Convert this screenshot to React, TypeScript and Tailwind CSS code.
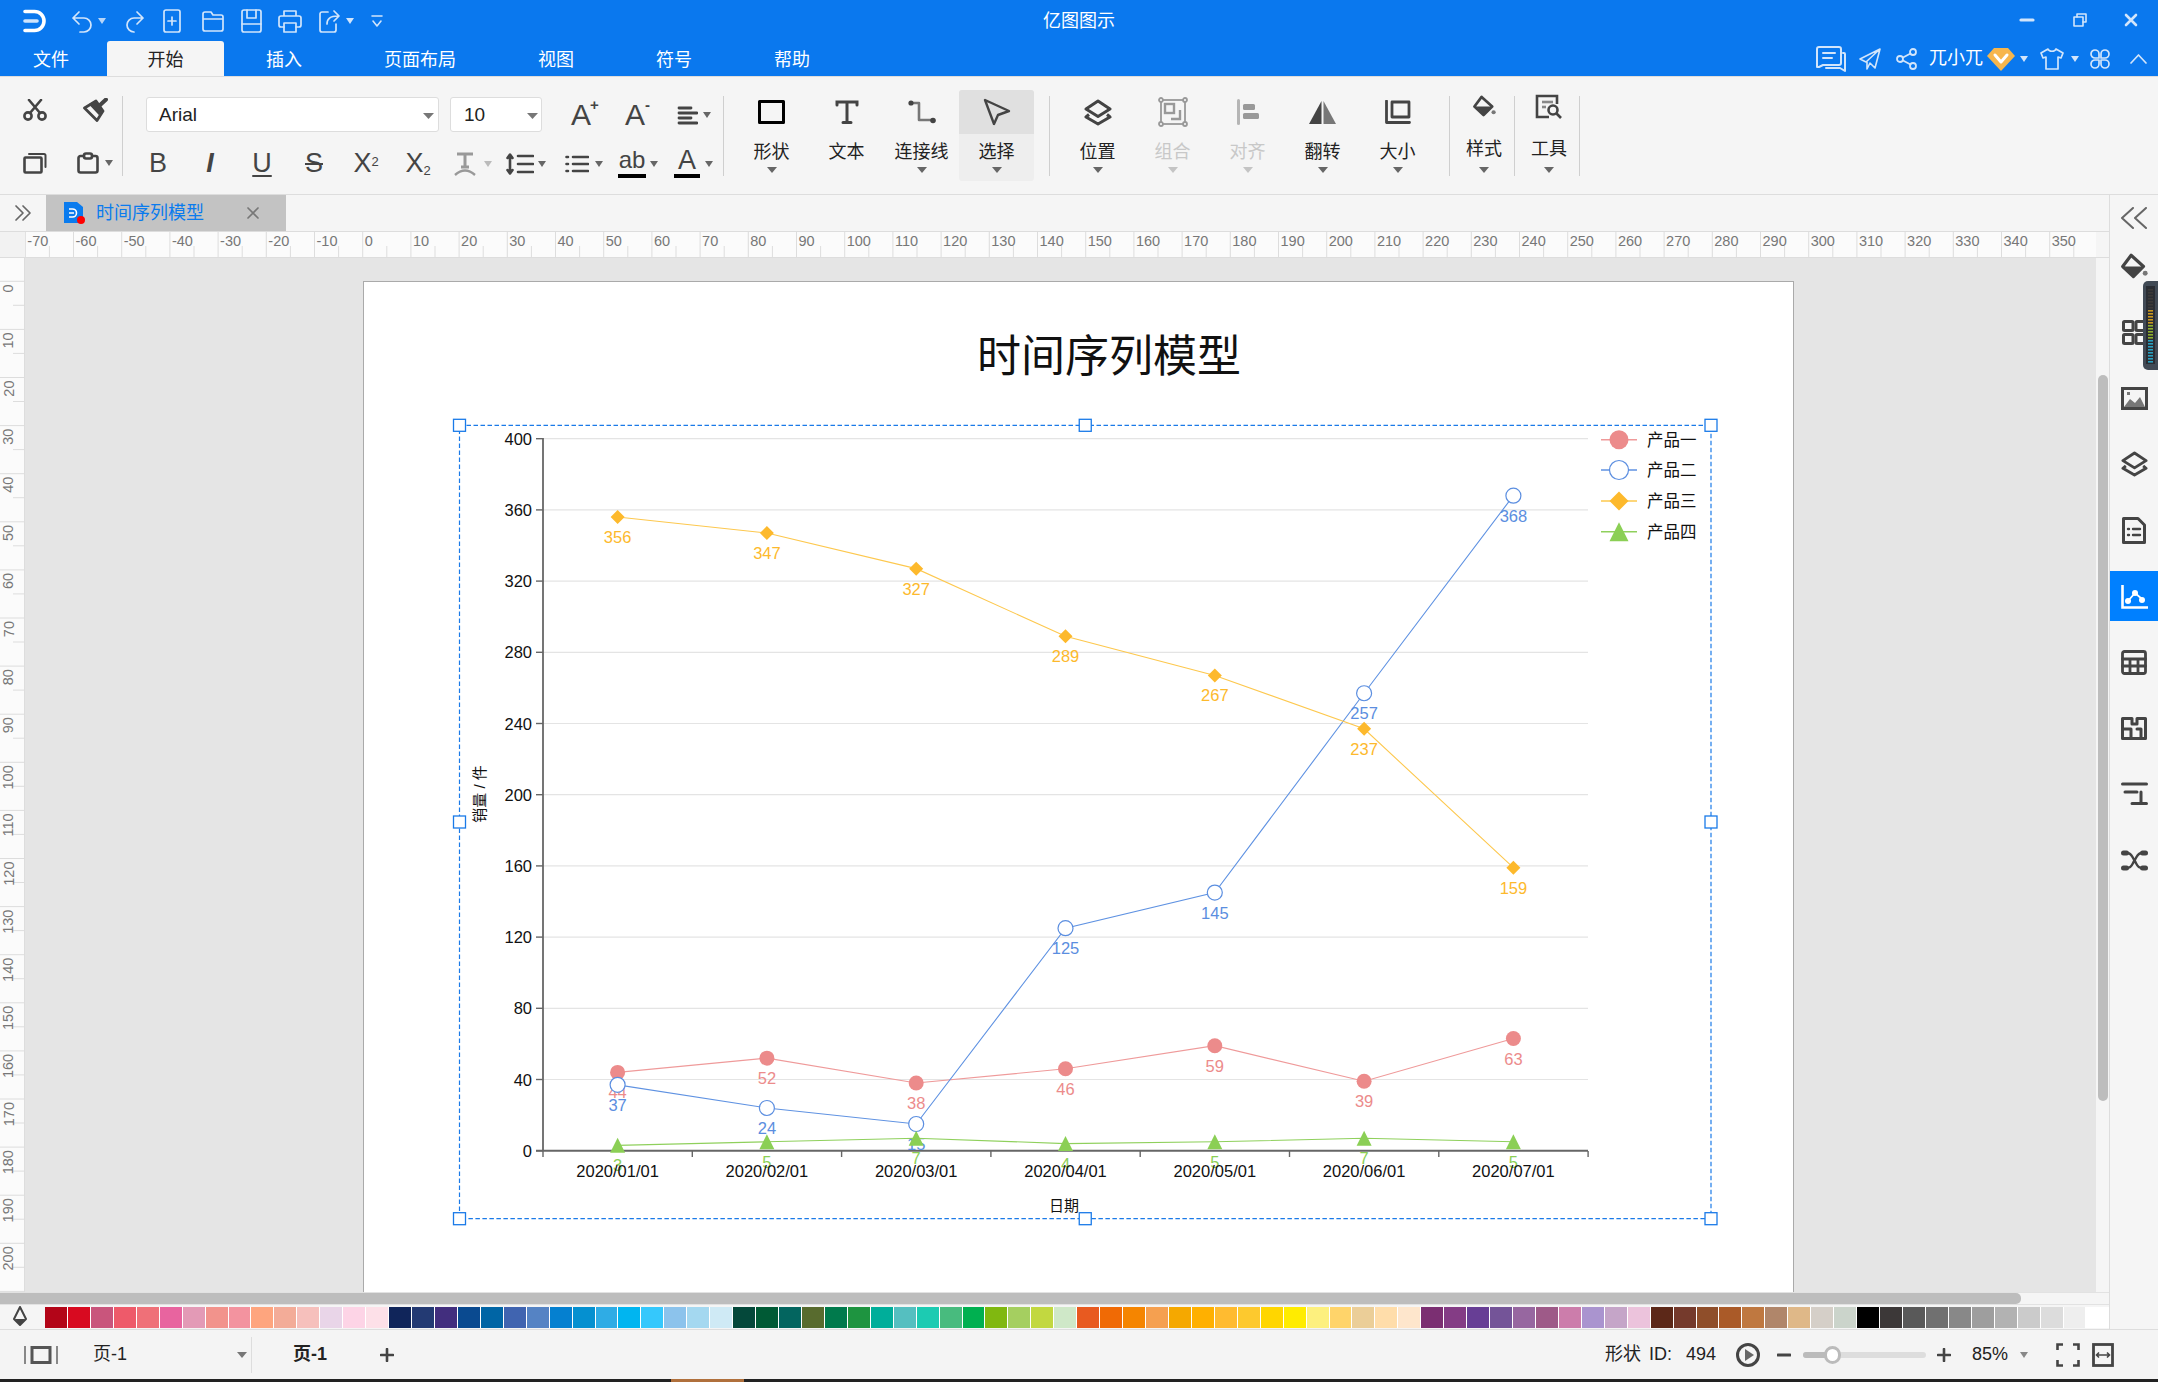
import React from "react";

type IP = { w: number; h: number; children: React.ReactNode; sw?: number; className?: string };
const I = ({ w, h, children, sw = 2.6, className = "" }: IP) => (
  <svg width={w} height={h} viewBox={`0 0 ${w} ${h}`} fill="none" stroke="currentColor" strokeWidth={sw} strokeLinecap="round" strokeLinejoin="round" className={`block shrink-0 ${className}`}>
    {children}
  </svg>
);
const Caret = ({ className = "text-[#666666]", w = 10 }: { className?: string; w?: number }) => (
  <svg width={w} height={6} viewBox="0 0 10 6" className={`block shrink-0 ${className}`} preserveAspectRatio="none">
    <path d="M0 0H10L5 6Z" fill="currentColor" />
  </svg>
);

const Bucket = ({ w = 24, h = 24, className = "" }: { w?: number; h?: number; className?: string }) => (
  <svg width={w} height={h} viewBox="0 0 24 24" fill="none" className={`block shrink-0 ${className}`}>
    <path d="M9 2 L20 12 L11 21 L1.5 12 Z" stroke="#444444" strokeWidth="2.8" strokeLinejoin="round" />
    <path d="M3 12 H19 L11 20 Z" fill="#444444" />
    <circle cx="21.5" cy="18" r="2.2" fill="#777777" />
  </svg>
);
const LayersIcon = ({ w = 28, h = 27 }: { w?: number; h?: number }) => (
  <svg width={w} height={h} viewBox="0 0 28 27" fill="none" stroke="#444444" strokeWidth="3" strokeLinejoin="round" className="block shrink-0">
    <path d="M14 2 L26 10 L14 17.5 L2 10 Z" />
    <path d="M5 15.5 L2 18 L14 25 L26 18 L23 15.5" />
  </svg>
);

const Tool = ({ className, children }: { className: string; children: React.ReactNode }) => (
  <div className={`flex h-[35px] shrink-0 items-center justify-center text-[#444444] ${className}`}>{children}</div>
);
const Letter = ({ className = "", children }: { className?: string; children: React.ReactNode }) => (
  <span className={`leading-none text-[#444444] ${className}`}>{children}</span>
);

const Big = ({ label, icon, caret = true, selected = false, disabled = false }: { label: string; icon: React.ReactNode; caret?: boolean; selected?: boolean; disabled?: boolean }) => (
  <div className={`flex w-[75px] shrink-0 flex-col items-center overflow-hidden rounded-[3px] pb-[8px] ${selected ? "bg-[#eeeeee]" : ""}`}>
    <div className={`flex h-[44px] w-full items-center justify-center ${selected ? "bg-[#e0e0e0]" : ""}`}>{icon}</div>
    <div className={`mt-[8px] h-[20px] text-[18px] leading-[20px] ${disabled ? "text-[#c8c8c8]" : "text-[#222222]"}`}>{label}</div>
    <div className="mt-[5px] h-[6px]">{caret && <Caret className={disabled ? "text-[#c4c4c4]" : "text-[#666666]"} />}</div>
  </div>
);
const Small = ({ label, icon }: { label: string; icon: React.ReactNode }) => (
  <div className="flex w-[64px] shrink-0 flex-col items-center pl-[4px]">
    <div className="flex h-[32px] w-full items-center justify-center">{icon}</div>
    <div className="mt-[17px] h-[20px] text-[18px] leading-[20px] text-[#222222]">{label}</div>
    <div className="mt-[8px] h-[6px]"><Caret /></div>
  </div>
);
const Sep = ({ className = "" }: { className?: string }) => <div className={`mt-[19px] h-[80px] w-px shrink-0 bg-[#cfcfcf] ${className}`} />;

const swatches = [
  "bg-[#b30518]","bg-[#d80a20]","bg-[#c9557c]","bg-[#ee5a6a]","bg-[#ef7078]","bg-[#e8649f]","bg-[#e39ab6]","bg-[#f2938c]","bg-[#f3939f]","bg-[#fea57e]","bg-[#f3ac98]","bg-[#f6c0bc]","bg-[#e9d5e8]","bg-[#fdd4e6]","bg-[#fde0e8]",
  "bg-[#10255a]","bg-[#233a73]","bg-[#422e7e]","bg-[#0a4a90]","bg-[#0065a5]","bg-[#4064b0]","bg-[#5583c4]","bg-[#0580d0]","bg-[#0590d0]","bg-[#2facE5]","bg-[#00b5f0]","bg-[#35c8fc]","bg-[#8cc3ec]","bg-[#a4d8f0]","bg-[#cfeaf5]",
  "bg-[#04483a]","bg-[#005a35]","bg-[#03655f]","bg-[#586b2e]","bg-[#007a4c]","bg-[#1e9440]","bg-[#00ae9a]","bg-[#55bfc0]","bg-[#1ccbb2]","bg-[#48bb7e]","bg-[#00b050]","bg-[#80b810]","bg-[#a5cf60]","bg-[#c2d840]","bg-[#cfe8c8]",
  "bg-[#e85a20]","bg-[#f06a05]","bg-[#f58500]","bg-[#f5a050]","bg-[#f5a800]","bg-[#ffb000]","bg-[#ffbb30]","bg-[#fdc92e]","bg-[#ffd600]","bg-[#ffec00]","bg-[#fdf07e]","bg-[#ffd46a]","bg-[#ebce98]","bg-[#ffddaa]","bg-[#fee6cc]",
  "bg-[#7b2f72]","bg-[#843c85]","bg-[#673e95]","bg-[#745498]","bg-[#9767a0]","bg-[#9e5a88]","bg-[#cc7dab]","bg-[#aa94cf]","bg-[#c5a5c8]","bg-[#ecc3dc]",
  "bg-[#5c2818]","bg-[#753a2c]","bg-[#8f4e2a]","bg-[#aa5a28]","bg-[#bf7840]","bg-[#b0866a]","bg-[#dfb888]","bg-[#d5cfc8]","bg-[#cbd4cb]",
  "bg-[#000000]","bg-[#3c3838]","bg-[#595959]","bg-[#707070]","bg-[#888888]","bg-[#9e9e9e]","bg-[#b2b2b2]","bg-[#cbcbcb]","bg-[#dcdcdc]","bg-[#eeeeee]","bg-[#ffffff]",
];

const range = (a: number, b: number, s: number) => { const r: number[] = []; for (let v = a; v <= b; v += s) r.push(v); return r; };

const TopRuler = () => (
  <svg width={2071} height={25} viewBox="25 232 2071 25" className="block shrink-0 bg-[#fbfbfb]">
    {range(-70, 350, 10).map((n) => {
      const x = 362.7 + n * 4.82;
      return (
        <g key={n}>
          <line x1={x} y1={232} x2={x} y2={257} stroke="#dddddd" />
          <line x1={x + 24.1} y1={246} x2={x + 24.1} y2={257} stroke="#dddddd" />
          <text x={x + 2} y={245.5} fontSize={14.5} fill="#777777">{n}</text>
        </g>
      );
    })}
  </svg>
);
const LeftRuler = () => (
  <svg width={25} height={1040} viewBox="0 258 25 1040" className="block shrink-0 bg-[#fbfbfb]">
    <line x1={24.5} y1={258} x2={24.5} y2={1298} stroke="#dddddd" />
    {range(0, 210, 10).map((n) => {
      const y = 281.3 + n * 4.81;
      return (
        <g key={n}>
          <line x1={0} y1={y} x2={25} y2={y} stroke="#dddddd" />
          <line x1={13} y1={y + 24} x2={25} y2={y + 24} stroke="#dddddd" />
          <text x={13.5} y={y + 3} fontSize={14.5} fill="#777777" textAnchor="end" transform={`rotate(-90 13.5 ${y + 3})`}>{n}</text>
        </g>
      );
    })}
  </svg>
);

const px = (i: number) => 617.6 + 149.3 * i;
const py = (v: number) => 1151.7 - v * 1.78;
const dates = ["2020/01/01", "2020/02/01", "2020/03/01", "2020/04/01", "2020/05/01", "2020/06/01", "2020/07/01"];
const series = [
  { name: "产品一", data: [44, 52, 38, 46, 59, 39, 63], line: "#ef9a9a", color: "#ec8b8b", kind: "dot" },
  { name: "产品二", data: [37, 24, 15, 125, 145, 257, 368], line: "#5f92e2", color: "#5b8ee0", kind: "ring" },
  { name: "产品三", data: [356, 347, 327, 289, 267, 237, 159], line: "#fdc84e", color: "#fdb92c", kind: "diamond" },
  { name: "产品四", data: [3, 5, 7, 4, 5, 7, 5], line: "#8fd05c", color: "#8bcf55", kind: "tri" },
];
const Marker = ({ kind, x, y, color, s = 7 }: { kind: string; x: number; y: number; color: string; s?: number }) => {
  if (kind === "dot") return <circle cx={x} cy={y} r={s} fill={color} />;
  if (kind === "ring") return <circle cx={x} cy={y} r={s} fill="#ffffff" stroke={color} strokeWidth={1.2} />;
  if (kind === "diamond") return <path d={`M${x} ${y - s}L${x + s} ${y}L${x} ${y + s}L${x - s} ${y}Z`} fill={color} />;
  return <path d={`M${x} ${y - s}L${x + s} ${y + s}L${x - s} ${y + s}Z`} fill={color} />;
};

const Chart = () => {
  const box = { l: 459.5, t: 426.3, r: 1711, b: 1219.7 };
  const hx = [box.l, (box.l + box.r) / 2, box.r];
  const hy = [box.t, (box.t + box.b) / 2, box.b];
  return (
    <svg width={1270} height={815} viewBox="450 415 1270 815" className="ml-[86px] mt-[27px] block">
      {range(40, 400, 40).map((v) => (
        <line key={v} x1={543} y1={py(v)} x2={1588} y2={py(v)} stroke="#e4e4e4" strokeWidth={1.2} />
      ))}
      {range(0, 400, 40).map((v) => (
        <g key={v}>
          <line x1={536} y1={py(v)} x2={543} y2={py(v)} stroke="#666666" strokeWidth={1.4} />
          <text x={532} y={py(v) + 6} fontSize={16.5} textAnchor="end" fill="#111111">{v}</text>
        </g>
      ))}
      {range(0, 7, 1).map((i) => (
        <line key={i} x1={543 + i * 149.3} y1={1152} x2={543 + i * 149.3} y2={1158} stroke="#666666" strokeWidth={1.4} />
      ))}
      <line x1={543} y1={439} x2={543} y2={1152} stroke="#666666" strokeWidth={1.8} />
      <line x1={536} y1={1151.7} x2={1588} y2={1151.7} stroke="#666666" strokeWidth={2} />
      {series.map((s) => (
        <g key={s.name}>
          <polyline points={s.data.map((v, i) => `${px(i)},${py(v)}`).join(" ")} fill="none" stroke={s.line} strokeWidth={1.1} />
          {s.data.map((v, i) => (
            <text key={i} x={px(i)} y={py(v) + 26} fontSize={16.5} textAnchor="middle" fill={s.color}>{v}</text>
          ))}
        </g>
      ))}
      {series.map((s) => (
        <g key={s.name}>
          {s.data.map((v, i) => (
            <Marker key={i} kind={s.kind} x={px(i)} y={py(v)} color={s.color} s={s.kind === "diamond" ? 7 : 7.5} />
          ))}
        </g>
      ))}
      {dates.map((d, i) => (
        <text key={d} x={px(i)} y={1178} fontSize={16.5} textAnchor="middle" fill="#111111">{d}</text>
      ))}
      <text x={1064} y={1212} fontSize={15} textAnchor="middle" fill="#111111">日期</text>
      <text x={0} y={0} fontSize={15} textAnchor="middle" fill="#111111" transform="translate(485 795) rotate(-90)">销量 / 件</text>
      {series.map((s, i) => {
        const y = [440.7, 471, 502, 532.7][i];
        return (
          <g key={s.name}>
            <line x1={1601} y1={y} x2={1637} y2={y} stroke={s.line} strokeWidth={1.6} />
            <Marker kind={s.kind} x={1619} y={y} color={s.color} s={9.5} />
            <text x={1647} y={y + 6} fontSize={16.5} fill="#111111">{s.name}</text>
          </g>
        );
      })}
      <rect x={box.l} y={box.t} width={box.r - box.l} height={box.b - box.t} fill="none" stroke="#1a7ae8" strokeWidth={1.2} strokeDasharray="4.5 2.5" />
      {hx.map((x, a) => hy.map((y, b) => (a === 1 && b === 1 ? null : (
        <rect key={`${a}${b}`} x={x - 6} y={y - 6} width={12} height={12} fill="#ffffff" stroke="#1a7ae8" strokeWidth={1.3} />
      ))))}
    </svg>
  );
};

const Meter = () => (
  <svg width={15} height={89} viewBox="0 0 15 89" className="absolute right-0 top-[86px] block">
    <path d="M5 0H15V89H5A5 5 0 0 1 0 84V5A5 5 0 0 1 5 0Z" fill="#414a55" />
    <rect x={3} y={5} width={9} height={78} fill="#2a2d33" />
    {range(0, 24, 1).map((i) => (
      <rect key={i} x={5} y={8 + i * 3} width={5} height={1.6} fill={i < 7 ? "#3c3a38" : i < 12 ? "#c9971e" : i < 17 ? "#8fae2c" : "#2a9fc0"} />
    ))}
  </svg>
);

const RP = ({ active = false, children }: { active?: boolean; children: React.ReactNode }) => (
  <div className={`flex h-[50px] w-full items-center justify-center ${active ? "bg-[#0080ff]" : ""}`}>{children}</div>
);

export default function App() {
  return (
    <div className="flex h-[1382px] w-[2158px] flex-col overflow-hidden bg-[#f5f5f5] font-['Liberation_Sans','Noto_Sans_CJK_SC',sans-serif]">
      {/* Title bar */}
      <div className="h-[76px] shrink-0 bg-[#0a78ee] text-white">
        <div className="grid h-[41px] grid-cols-[1fr_auto_1fr] items-center">
          <div className="flex items-center text-[#d2e5fb]">
            <svg width={24} height={24} viewBox="0 0 24 24" fill="none" className="ml-[23px] block shrink-0">
              <path d="M2 2.5H11.5A9.5 9.5 0 0 1 11.5 21.5H2" stroke="#ffffff" strokeWidth="3.6" strokeLinecap="round" />
              <path d="M2 12H14" stroke="#cfe4fc" strokeWidth="3.6" strokeLinecap="round" />
            </svg>
            <I w={22} h={24} sw={1.7} className="ml-[24px]"><path d="M8 3L2 9L8 15M2 9H13A7 7 0 0 1 13 23H9" /></I>
            <Caret w={8} className="ml-[5px] text-[#b7d5f8]" />
            <I w={19} h={24} sw={1.7} className="ml-[20px]"><path d="M11 3L17 9L11 15M17 9H8A7 7 0 0 0 8 23" /></I>
            <I w={18} h={24} sw={1.7} className="ml-[18px]"><rect x={1} y={1} width={16} height={22} rx={2} /><path d="M9 8V16M5 12H13" /></I>
            <I w={22} h={24} sw={1.7} className="ml-[21px]"><path d="M1 20V5A2 2 0 0 1 3 3H9L11 6H19A2 2 0 0 1 21 8V20A2 2 0 0 1 19 22H3A2 2 0 0 1 1 20ZM1 10H21" /></I>
            <I w={21} h={24} sw={1.7} className="ml-[17px]"><rect x={1} y={1} width={19} height={22} rx={2} /><path d="M6 1V9H15V1M1 15H20" /></I>
            <I w={24} h={24} sw={1.7} className="ml-[16px]"><path d="M6 7V2H18V7M6 18H3A2 2 0 0 1 1 16V9A2 2 0 0 1 3 7H21A2 2 0 0 1 23 9V16A2 2 0 0 1 21 18H18" /><rect x={6} y={14} width={12} height={9} /></I>
            <I w={21} h={24} sw={1.7} className="ml-[17px]"><path d="M9 3H3A2 2 0 0 0 1 5V21A2 2 0 0 0 3 23H15A2 2 0 0 0 17 21V15" /><path d="M8 15C8 10 11 7 19 7M15 2L20 7L15 12" /></I>
            <Caret w={8} className="ml-[6px] text-[#d2e5fb]" />
            <I w={12} h={14} sw={1.6} className="ml-[17px]"><path d="M1 2H11M2 7L6 12L10 7" /></I>
          </div>
          <div className="text-[18px] leading-none">亿图图示</div>
          <div className="flex items-center justify-end pb-[2px] text-[#d2e5fb]">
            <I w={16} h={6} sw={3.2}><path d="M2 3H14" /></I>
            <I w={14} h={14} sw={1.6} className="ml-[38px]"><path d="M4 4V1H13V9H10" /><rect x={1} y={4} width={9} height={9} /></I>
            <I w={14} h={14} sw={2.6} className="ml-[37px] mr-[20px]"><path d="M2 2L12 12M12 2L2 12" /></I>
          </div>
        </div>
        <div className="flex h-[35px] items-center text-[18px]">
          <div className="flex h-full w-[102px] items-center justify-center pt-[3px]">文件</div>
          <div className="ml-[5px] flex h-full w-[117px] items-center justify-center rounded-t-[3px] bg-[#f5f5f5] pt-[3px] text-[#222222]">开始</div>
          <div className="flex h-full w-[120px] items-center justify-center pt-[3px]">插入</div>
          <div className="flex h-full w-[152px] items-center justify-center pt-[3px]">页面布局</div>
          <div className="flex h-full w-[120px] items-center justify-center pt-[3px]">视图</div>
          <div className="flex h-full w-[116px] items-center justify-center pt-[3px]">符号</div>
          <div className="flex h-full w-[120px] items-center justify-center pt-[3px]">帮助</div>
          <div className="ml-auto flex items-center text-[#d2e5fb]">
            <I w={30} h={26} sw={2}><path d="M3 1H23A2 2 0 0 1 25 3V17A2 2 0 0 1 23 19H7L3 21H1V3A2 2 0 0 1 3 1Z" /><path d="M7 7H19M7 12H16M27 7H28A1 1 0 0 1 29 8V25L24 22H10" /></I>
            <I w={22} h={22} sw={1.6} className="ml-[13px]"><path d="M21 1L1 11L7 14L21 1L16 20L11 15L8 21V14" /></I>
            <I w={21} h={22} sw={1.8} className="ml-[15px]"><circle cx={4} cy={11} r={3} /><circle cx={17} cy={4} r={3} /><circle cx={17} cy={18} r={3} /><path d="M7 9.5L14.5 5.5M7 12.5L14.5 16.5" /></I>
            <span className="ml-[12px] text-white">兀小兀</span>
            <svg width={28} height={24} viewBox="0 0 28 24" className="ml-[4px] block shrink-0">
              <path d="M7 1H21L28 9L14 24L0 9Z" fill="#f7b64c" />
              <path d="M8 8L14 15L20 8" fill="none" stroke="#ffffff" strokeWidth="3" strokeLinecap="round" strokeLinejoin="round" />
            </svg>
            <Caret w={8} className="ml-[5px] text-[#d2e5fb]" />
            <I w={24} h={22} sw={1.7} className="ml-[12px]"><path d="M8 1L1 5L3 10L6 9V21H18V9L21 10L23 5L16 1C15 4 9 4 8 1Z" /></I>
            <Caret w={8} className="ml-[7px] text-[#d2e5fb]" />
            <I w={20} h={20} sw={1.7} className="ml-[11px]"><path d="M5 1A4 4 0 0 1 9 5V9H5A4 4 0 0 1 5 1ZM15 1A4 4 0 0 0 11 5V9H15A4 4 0 0 0 15 1ZM5 19A4 4 0 0 0 9 15V11H5A4 4 0 0 0 5 19ZM15 19A4 4 0 0 1 11 15V11H15A4 4 0 0 1 15 19Z" /></I>
            <I w={17} h={10} sw={1.7} className="ml-[20px] mr-[11px]"><path d="M1 9L8.5 1L16 9" /></I>
          </div>
        </div>
      </div>

      {/* Ribbon */}
      <div className="flex h-[119px] shrink-0 border-y border-[#dddddd] bg-[#f5f5f5]">
        <div className="w-[122px] shrink-0 pl-[5px] pt-[15px]">
          <div className="flex h-[36px] items-center">
            <Tool className="w-[60px]">
              <I w={24} h={22} sw={2.6}><circle cx={5} cy={17} r={3.6} /><circle cx={19} cy={17} r={3.6} /><path d="M7 14L18 1M17 14L6 1" /></I>
            </Tool>
            <Tool className="w-[60px]">
              <svg width={25} height={24} viewBox="0 0 25 24" fill="none" className="block">
                <path d="M1.5 10L13 3L20 13L14 22.5Z" stroke="#444444" strokeWidth="2.8" strokeLinejoin="round" />
                <path d="M7 6.5L13 3L19 12L16 16Z" fill="#444444" stroke="#444444" strokeWidth="1.5" />
                <path d="M16 8L23 1.5" stroke="#444444" strokeWidth="4" strokeLinecap="round" />
              </svg>
            </Tool>
          </div>
          <div className="mt-[17px] flex h-[36px] items-center">
            <Tool className="w-[60px]">
              <I w={24} h={22} sw={2.6}><rect x={1.5} y={5.5} width={17} height={15} rx={1} /><path d="M6 2H21A1.5 1.5 0 0 1 22.5 3.5V15" strokeWidth={2} /></I>
            </Tool>
            <Tool className="w-[57px] gap-[6px]">
              <I w={22} h={22} sw={2.6} className="ml-[2px]"><path d="M7 4H3.5A2 2 0 0 0 1.5 6V18.5A2 2 0 0 0 3.5 20.5H18.5A2 2 0 0 0 20.5 18.5V6A2 2 0 0 0 18.5 4H15" /><rect x={7} y={1.5} width={8} height={5} rx={2} /></I>
              <Caret w={8} />
            </Tool>
          </div>
        </div>
        <Sep />
        <div className="w-[600px] shrink-0 pt-[20px]">
          <div className="flex h-[35px] items-center pl-[23px]">
            <div className="flex h-[35px] w-[293px] shrink-0 items-center justify-between rounded-[3px] border border-[#dddddd] bg-white pl-[12px] pr-[3px] pt-[2px] text-[19px] text-[#222222]">
              Arial
              <Caret className="mr-[1px] text-[#777777]" w={11} />
            </div>
            <div className="ml-[11px] flex h-[35px] w-[92px] shrink-0 items-center justify-between rounded-[3px] border border-[#dddddd] bg-white pl-[13px] pr-[3px] pt-[2px] text-[19px] text-[#222222]">
              10
              <Caret className="text-[#777777]" w={11} />
            </div>
            <Tool className="ml-[12px] w-[54px]">
              <Letter className="relative text-[30px]">A<span className="absolute left-[19px] top-[-3px] text-[15px] font-bold">+</span></Letter>
            </Tool>
            <Tool className="w-[54px]">
              <Letter className="relative text-[30px]">A<span className="absolute left-[20px] top-[-3px] text-[15px] font-bold">-</span></Letter>
            </Tool>
            <Tool className="w-[63px] gap-[5px]">
              <I w={21} h={20} sw={2.8}><path d="M2 3H14M2 8H20M2 13H14M2 18H20" /></I>
              <Caret w={8} />
            </Tool>
          </div>
          <div className="mt-[14px] flex h-[35px] items-center">
            <Tool className="ml-[9px] w-[52px]"><Letter className="text-[27px]">B</Letter></Tool>
            <Tool className="w-[52px]"><Letter className="text-[27px] font-bold italic">I</Letter></Tool>
            <Tool className="w-[52px]"><Letter className="text-[27px] underline underline-offset-[3px]">U</Letter></Tool>
            <Tool className="w-[52px]"><Letter className="text-[27px] line-through">S</Letter></Tool>
            <Tool className="w-[52px]"><Letter className="text-[27px]">X<sup className="text-[13px]">2</sup></Letter></Tool>
            <Tool className="w-[52px]"><Letter className="text-[27px]">X<sub className="text-[13px]">2</sub></Letter></Tool>
            <Tool className="w-[57px] gap-[7px]">
              <svg width={24} height={26} viewBox="0 0 24 26" fill="none" stroke="#999999" strokeWidth="3" className="block"><path d="M4 3H20M12 3V16M8 16H16" /><path d="M2 24Q12 15 22 24" strokeWidth="2.4" /></svg>
              <Caret w={8} className="text-[#bbbbbb]" />
            </Tool>
            <Tool className="w-[50px] gap-[4px]">
              <I w={28} h={24} sw={2.6}><path d="M12 4H27M12 12H27M12 20H27" /><path d="M4 3V21M1.5 6L4 2.5L6.5 6M1.5 18L4 21.5L6.5 18" /></I>
              <Caret w={8} />
            </Tool>
            <Tool className="w-[66px] gap-[6px]">
              <I w={24} h={20} sw={2.6}><path d="M8 3H23M8 10H23M8 17H23M1.5 3H3M1.5 10H3M1.5 17H3" /></I>
              <Caret w={8} />
            </Tool>
            <Tool className="w-[42px] gap-[4px]">
              <div className="flex w-[28px] flex-col items-center">
                <span className="text-[24px] leading-[20px] text-[#444444]">ab</span>
                <div className="mt-[4px] h-[4px] w-full bg-black" />
              </div>
              <Caret w={8} />
            </Tool>
            <Tool className="w-[69px] gap-[5px]">
              <div className="flex w-[26px] flex-col items-center">
                <span className="text-[27px] leading-[22px] text-[#444444]">A</span>
                <div className="mt-[3px] h-[4px] w-full bg-black" />
              </div>
              <Caret w={8} />
            </Tool>
          </div>
        </div>
        <div className="flex">
          <Sep />
          <div className="ml-[10px] mt-[13px] flex self-start">
            <Big label="形状" icon={<I w={27} h={24} sw={3}><rect x={1.5} y={1.5} width={24} height={21} /></I>} />
            <Big label="文本" caret={false} icon={
              <svg width={24} height={24} viewBox="0 0 24 24" fill="none" stroke="#444444" strokeWidth="3" strokeLinecap="round" className="block"><path d="M2 5V2H22V5M12 2V22M8 22.5H16" /></svg>
            } />
            <Big label="连接线" icon={
              <svg width={28} height={24} viewBox="0 0 28 24" fill="none" className="block">
                <path d="M4 3H11V20H24" stroke="#777777" strokeWidth="2.6" strokeLinejoin="round" />
                <circle cx={3} cy={3} r={2.6} fill="#444444" /><circle cx={25} cy={20.5} r={2.8} fill="#444444" />
              </svg>
            } />
            <Big label="选择" selected icon={<I w={28} h={28} sw={2.4} className="text-[#444444]"><path d="M2 2L26 13L15 17L11 26Z" /></I>} />
          </div>
          <Sep className="ml-[15px]" />
          <div className="ml-[10px] mt-[13px] flex self-start">
            <Big label="位置" icon={<LayersIcon />} />
            <Big label="组合" disabled icon={
              <svg width={30} height={30} viewBox="0 0 30 30" fill="none" stroke="#999999" strokeWidth="1.8" className="block">
                <rect x={3} y={3} width={24} height={24} />
                <g fill="#f5f5f5"><circle cx={3} cy={3} r={2} /><circle cx={27} cy={3} r={2} /><circle cx={3} cy={27} r={2} /><circle cx={27} cy={27} r={2} /></g>
                <rect x={7} y={7} width={9} height={9} strokeWidth="2.4" /><path d="M22 13V22H13" strokeWidth="2.4" />
              </svg>
            } />
            <Big label="对齐" disabled icon={
              <svg width={22} height={28} viewBox="0 0 22 28" className="block" fill="#999999">
                <rect x={0} y={1} width={3} height={26} rx={1.5} fill="#b5b5b5" /><rect x={6} y={6} width={12} height={6} rx={1.5} /><rect x={6} y={15} width={16} height={6} rx={1.5} />
              </svg>
            } />
            <Big label="翻转" icon={
              <svg width={27} height={24} viewBox="0 0 27 24" className="block"><path d="M12.5 1V24H0Z" fill="#444444" /><path d="M14.5 1V24H27Z" fill="#777777" /></svg>
            } />
            <Big label="大小" icon={
              <I w={26} h={24} sw={2.8} className="text-[#444444]"><path d="M1.5 1V22.5H24.5" /><rect x={7} y={2} width={17} height={15} /></I>
            } />
          </div>
          <Sep className="ml-[14px]" />
          <div className="mt-[13px] flex self-start"><Small label="样式" icon={<Bucket w={23} h={23} />} /></div>
          <Sep />
          <div className="mt-[13px] flex self-start"><Small label="工具" icon={
            <svg width={28} height={25} viewBox="0 0 28 25" fill="none" stroke="#444444" strokeWidth="2.6" className="block">
              <path d="M14 23H2V2H22V10" /><path d="M7 8H18" stroke="#888888" /><path d="M7 13H11" stroke="#888888" />
              <circle cx={18} cy={16} r={4.5} /><path d="M21.5 19.5L26 24" />
            </svg>
          } /></div>
          <Sep />
        </div>
      </div>

      {/* Middle */}
      <div className="flex min-h-0 flex-1">
        <div className="flex min-w-0 flex-1 flex-col">
          <div className="flex h-[37px] shrink-0 border-b border-[#dddddd]">
            <div className="flex w-[46px] items-center justify-center text-[#666666]">
              <I w={20} h={20} sw={1.7}><path d="M3 3L10 10L3 17M10 3L17 10L10 17" /></I>
            </div>
            <div className="flex h-[36px] w-[240px] items-center bg-[#c3c3c3] pl-[18px]">
              <svg width={22} height={23} viewBox="0 0 22 23" className="block shrink-0">
                <path d="M0 0H13L19 5V21H0Z" fill="#0a7bee" />
                <path d="M5 7H8.5A4 4 0 0 1 8.5 15H5M5 11H10" fill="none" stroke="#ffffff" strokeWidth="1.6" />
                <circle cx={17} cy={18} r={4} fill="#ff0000" />
              </svg>
              <span className="ml-[10px] text-[18px] text-[#0a7bee]">时间序列模型</span>
              <I w={12} h={12} sw={1.7} className="ml-[43px] text-[#777777]"><path d="M1 1L11 11M11 1L1 11" /></I>
            </div>
          </div>
          <div className="flex h-[26px] shrink-0 border-b border-[#dddddd]">
            <div className="w-[25px] shrink-0 bg-[#f2f2f2]" />
            <TopRuler />
          </div>
          <div className="flex min-h-0 flex-1">
            <div className="shrink-0 overflow-hidden"><LeftRuler /></div>
            <div className="min-w-0 flex-1 overflow-hidden bg-[#e5e5e5]">
              <div className="ml-[338px] mt-[23px] h-[1100px] w-[1431px] border-x border-t border-[#aaaaaa] bg-white">
                <div className="pl-[61px] pt-[45px] text-center text-[44px] leading-[60px] text-[#111111]">时间序列模型</div>
                <Chart />
              </div>
            </div>
            <div className="w-[13px] shrink-0 pl-[2px] pt-[117px]">
              <div className="h-[726px] w-[10px] rounded-[5px] bg-[#bdbdbd]" />
            </div>
          </div>
          <div className="flex h-[13px] shrink-0 border-y border-[#e2e2e2]">
            <div className="h-full w-[2021px] rounded-r-[5px] bg-[#bdbdbd]" />
          </div>
          <div className="flex h-[24px] shrink-0 items-center">
            <div className="flex w-[45px] shrink-0 justify-center pr-[5px]">
              <svg width={18} height={22} viewBox="0 0 18 22" fill="none" className="block">
                <path d="M9 1L15 13L9 19L3 13Z" stroke="#444444" strokeWidth="2" strokeLinejoin="round" />
                <path d="M4 13H14L9 19Z" fill="#444444" />
              </svg>
            </div>
            <div className="flex h-[21px] w-[2064px] shrink-0">
              {swatches.map((c, i) => (
                <div key={i} className={`min-w-0 flex-1 border-r border-white ${c}`} />
              ))}
            </div>
          </div>
        </div>
        <div className="relative w-[49px] shrink-0 border-l border-[#dddddd]">
          <div className="flex h-[46px] items-center justify-center text-[#666666]">
            <I w={28} h={22} sw={2}><path d="M13 1L2 11L13 21M26 1L15 11L26 21" /></I>
          </div>
          <div className="flex flex-col gap-[16px]">
            <RP><Bucket w={27} h={27} /></RP>
            <RP><I w={25} h={25} sw={3} className="text-[#444444]"><rect x={1.5} y={1.5} width={9.5} height={9} rx={1} /><rect x={14} y={1.5} width={9.5} height={9} rx={1} /><rect x={1.5} y={14.5} width={9.5} height={9} rx={1} /><rect x={14} y={14.5} width={9.5} height={9} rx={1} /></I></RP>
            <RP>
              <svg width={27} height={23} viewBox="0 0 27 23" fill="none" className="block">
                <rect x={1.5} y={1.5} width={24} height={20} stroke="#444444" strokeWidth="3" />
                <path d="M3 20L9 12L14 16L19 10L24 20Z" fill="#777777" /><rect x={6} y={5} width={3} height={3} fill="#777777" />
              </svg>
            </RP>
            <RP><LayersIcon w={27} h={26} /></RP>
            <RP>
              <I w={24} h={27} sw={3} className="text-[#444444]"><path d="M1.5 1.5H16L22.5 8V25.5H1.5Z" /><path d="M6 12H7M11 12H18M6 18H7M11 18H18" strokeWidth={2.4} /></I>
            </RP>
            <RP active>
              <svg width={27} height={25} viewBox="0 0 27 25" fill="none" stroke="#ffffff" className="block">
                <path d="M1.5 1V23.5H27" strokeWidth="2.6" />
                <path d="M7 17L14 9L21 15" strokeWidth="1.8" />
                <g fill="#ffffff" stroke="none"><circle cx={7} cy={17} r={3} /><circle cx={14} cy={9} r={3} /><circle cx={21} cy={16} r={3} /></g>
              </svg>
            </RP>
            <RP><I w={26} h={25} sw={2.8} className="text-[#444444]"><rect x={1.5} y={1.5} width={23} height={22} rx={2} /><path d="M1.5 9H24.5M1.5 16H24.5M9 9V23M17 9V23" /></I></RP>
            <RP><I w={26} h={23} sw={3} className="text-[#444444]"><path d="M1.5 1.5H11V7H16V1.5H24.5V21.5H1.5ZM1.5 12H10V21.5M16 12H20V21.5" /></I></RP>
            <RP>
              <svg width={27} height={25} viewBox="0 0 27 25" fill="none" stroke="#444444" strokeWidth="3" strokeLinecap="round" className="block"><path d="M1.5 2H25.5M4 10H16M20 10V20M11 21.5H25.5" /></svg>
            </RP>
            <RP>
              <svg width={27} height={23} viewBox="0 0 27 23" fill="none" stroke="#444444" strokeWidth="2.4" className="block">
                <path d="M6 4C11 4 11 8 13.5 11.5C16 15 16 19 21 19M6 19C11 19 11 15 13.5 11.5C16 8 16 4 21 4" />
                <g fill="#444444" stroke="none"><rect x={0} y={1.5} width={8} height={5} rx={2.5} /><rect x={19} y={1.5} width={8} height={5} rx={2.5} /><rect x={0} y={16.5} width={8} height={5} rx={2.5} /><rect x={19} y={16.5} width={8} height={5} rx={2.5} /></g>
              </svg>
            </RP>
          </div>
          <Meter />
        </div>
      </div>

      {/* Status bar */}
      <div className="flex h-[50px] shrink-0 items-center border-t border-[#dddddd] bg-[#f4f4f4] text-[18px] text-[#222222]">
        <svg width={34} height={18} viewBox="0 0 34 18" fill="none" stroke="#555555" className="ml-[24px] block shrink-0">
          <path d="M1 0V18M33 0V18" strokeWidth="2" stroke="#888888" /><rect x={8} y={1.5} width={18} height={15} strokeWidth="3" />
        </svg>
        <div className="ml-[35px] flex w-[154px] shrink-0 items-center justify-between">
          <span>页-1</span>
          <Caret className="text-[#777777]" w={10} />
        </div>
        <div className="ml-[4px] h-[36px] w-px shrink-0 bg-[#dddddd]" />
        <span className="ml-[41px] font-bold">页-1</span>
        <I w={14} h={14} sw={2.6} className="ml-[53px] text-[#444444]"><path d="M7 1V13M1 7H13" /></I>
        <div className="ml-auto flex items-center">
          <span>形状</span>
          <span className="ml-[8px]">ID:</span>
          <span className="ml-[14px]">494</span>
          <svg width={24} height={24} viewBox="0 0 24 24" fill="none" className="ml-[20px] block shrink-0"><circle cx={12} cy={12} r={10.5} stroke="#444444" strokeWidth="3" /><path d="M9 6L18 12L9 18Z" fill="#666666" /></svg>
          <I w={14} h={4} sw={3} className="ml-[17px] text-[#444444]"><path d="M1 2H13" /></I>
          <div className="relative ml-[12px] flex h-[6px] w-[123px] shrink-0 rounded-[3px] bg-[#dddddd]">
            <div className="w-[25px] rounded-l-[3px] bg-[#bbbbbb]" />
            <div className="absolute left-[21px] top-[-6px] h-[18px] w-[17px] rounded-full border-[3px] border-[#bbbbbb] bg-white" />
          </div>
          <I w={14} h={14} sw={2.6} className="ml-[11px] text-[#444444]"><path d="M7 1V13M1 7H13" /></I>
          <span className="ml-[21px]">85%</span>
          <Caret className="ml-[12px] text-[#888888]" w={8} />
          <svg width={24} height={24} viewBox="0 0 24 24" fill="none" stroke="#444444" strokeWidth="2.6" className="ml-[28px] block shrink-0"><path d="M1.5 7V1.5H7M17 1.5H22.5V7M1.5 17V22.5H7M17 22.5H22.5V17" /></svg>
          <svg width={22} height={24} viewBox="0 0 22 24" fill="none" stroke="#444444" className="ml-[12px] mr-[44px] block shrink-0"><rect x={1.5} y={1.5} width={19} height={21} strokeWidth="2.8" /><path d="M5 12H17M7 9.5L4.5 12L7 14.5M15 9.5L17.5 12L15 14.5" strokeWidth="1.6" /></svg>
        </div>
      </div>
      <div className="flex h-[3px] shrink-0 bg-[#222222]">
        <div className="ml-[671px] h-full w-[73px] bg-[#b0703c]" />
      </div>
    </div>
  );
}
